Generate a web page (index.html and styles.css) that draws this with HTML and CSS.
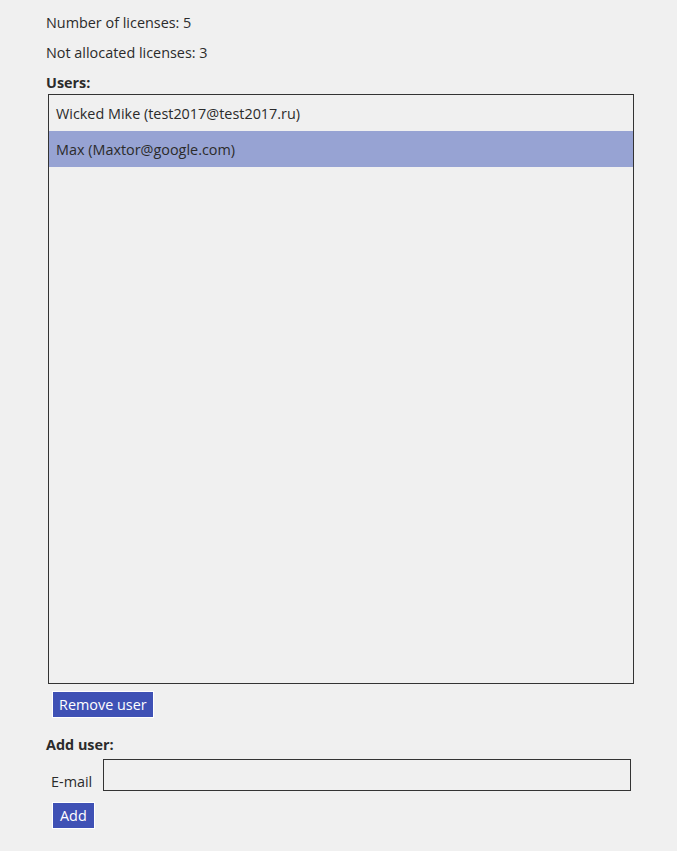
FILE: index.html
```html
<!DOCTYPE html>
<html>
<head>
<meta charset="utf-8">
<link rel="stylesheet" href="styles.css">
</head>
<body>
<div class="page">
  <p class="info">Number of licenses: 5</p>
  <p class="info">Not allocated licenses: 3</p>
  <p class="heading">Users:</p>
  <div class="listbox">
    <div class="row">Wicked Mike (test2017@test2017.ru)</div>
    <div class="row selected">Max (Maxtor@google.com)</div>
  </div>
  <div class="btn-line"><button class="btn">Remove user</button></div>
  <p class="heading add-heading">Add user:</p>
  <div class="field">
    <label class="field-label">E-mail</label>
    <input class="field-input" type="text">
  </div>
  <div class="btn-line add-line"><button class="btn btn-add">Add</button></div>
</div>
</body>
</html>
```
FILE: styles.css
```css
html, body {
  margin: 0;
  padding: 0;
  background: #f0f0f0;
}
body {
  font-family: "Open Sans", "Noto Sans", sans-serif;
  font-size: 14.4px;
  color: #2b2b2b;
}
.page {
  padding: 13px 0 0 46px;
  width: 588px;
}
.info {
  margin: 0 0 10px 0;
  line-height: 20px;
  height: 20px;
}
.heading {
  margin: 0;
  line-height: 20px;
  font-weight: bold;
}
.listbox {
  margin: 1px 0 0 2px;
  width: 584px;
  height: 588px;
  border: 1px solid #333;
}
.row {
  height: 36px;
  line-height: 37px;
  padding-left: 7px;
}
.row.selected {
  background: #97a3d3;
}
.btn-line {
  margin: 7px 0 0 6px;
  display: flex;
}
.btn {
  box-sizing: border-box;
  margin: 0;
  font-family: inherit;
  font-size: 14.4px;
  color: #fff;
  background: #3f51b5;
  border: 1px solid #fff;
  height: 27px;
  padding: 0 6px;
  line-height: 25px;
}
.btn-add {
  padding: 0 7px;
}
.add-heading {
  margin-top: 17px;
}
.field {
  display: flex;
  align-items: flex-end;
  margin: 4px 0 0 5px;
}
.field-label {
  line-height: 20px;
  margin-bottom: -1px;
  width: 52px;
}
.field-input {
  box-sizing: border-box;
  width: 528px;
  height: 32px;
  border: 1px solid #333;
  background: #f0f0f0;
  margin: 0;
}
.add-line {
  margin-top: 11px;
}
```
